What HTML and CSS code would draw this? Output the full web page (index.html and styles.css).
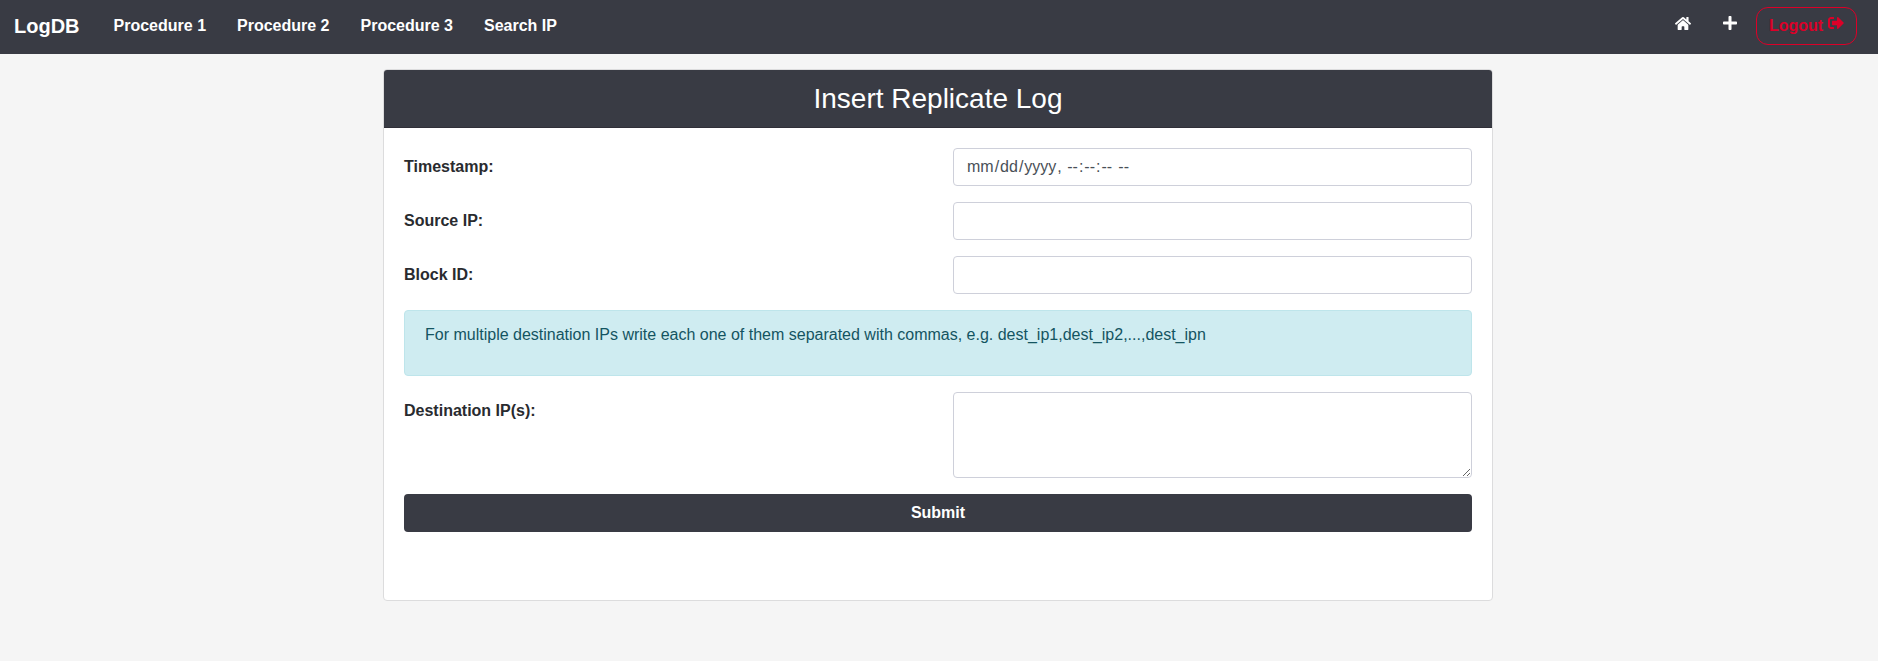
FILE: index.html
```html
<!DOCTYPE html>
<html lang="en">
<head>
<meta charset="utf-8">
<title>LogDB</title>
<link rel="stylesheet" href="styles.css">
</head>
<body>
<nav class="navbar">
  <a class="brand">LogDB</a>
  <div class="nav-links">
    <a>Procedure 1</a>
    <a>Procedure 2</a>
    <a>Procedure 3</a>
    <a>Search IP</a>
  </div>
  <div class="nav-actions">
    <a class="icon-home"><svg width="16" height="15" viewBox="0 0 576 512" preserveAspectRatio="none" fill="currentColor"><path d="M280.37 148.26L96 300.11V464a16 16 0 0 0 16 16l112.06-.29a16 16 0 0 0 15.92-16V368a16 16 0 0 1 16-16h64a16 16 0 0 1 16 16v95.64a16 16 0 0 0 16 16.05L464 480a16 16 0 0 0 16-16V300L295.67 148.26a12.19 12.19 0 0 0-15.3 0zM571.6 251.47L488 182.56V44.05a12 12 0 0 0-12-12h-56a12 12 0 0 0-12 12v72.61L318.47 43a48 48 0 0 0-61 0L4.34 251.47a12 12 0 0 0-1.6 16.9l25.5 31A12 12 0 0 0 45.15 301l235.22-193.74a12.19 12.19 0 0 1 15.3 0L530.9 301a12 12 0 0 0 16.9-1.6l25.5-31a12 12 0 0 0-1.7-16.93z"/></svg></a>
    <a class="icon-plus"><svg width="14" height="16" viewBox="0 0 448 512" fill="currentColor"><path d="M416 208H272V64c0-17.67-14.33-32-32-32h-32c-17.67 0-32 14.33-32 32v144H32c-17.67 0-32 14.33-32 32v32c0 17.67 14.33 32 32 32h144v144c0 17.67 14.33 32 32 32h32c17.67 0 32-14.33 32-32V304h144c17.67 0 32-14.33 32-32v-32c0-17.67-14.33-32-32-32z"/></svg></a>
    <a class="logout">Logout <svg width="16" height="16" viewBox="0 0 512 512" fill="currentColor"><path d="M497 273L329 441c-15 15-41 4.500-41-17v-96H152c-13.300 0-24-10.700-24-24v-96c0-13.300 10.700-24 24-24h136V88c0-21.400 25.900-32 41-17l168 168c9.300 9.400 9.300 24.600 0 34zM192 436v-40c0-6.600-5.400-12-12-12H96c-17.700 0-32-14.300-32-32V160c0-17.700 14.300-32 32-32h84c6.600 0 12-5.400 12-12V76c0-6.600-5.400-12-12-12H96c-53 0-96 43-96 96v192c0 53 43 96 96 96h84c6.600 0 12-5.400 12-12z"/></svg></a>
  </div>
</nav>
<main class="card">
  <h3 class="card-header">Insert Replicate Log</h3>
  <form class="card-body">
    <div class="row"><label for="ts">Timestamp:</label><input class="control" id="ts" type="datetime-local" step="1"></div>
    <div class="row"><label for="src">Source IP:</label><input class="control" id="src" type="text"></div>
    <div class="row"><label for="blk">Block ID:</label><input class="control" id="blk" type="text"></div>
    <div class="alert"><p>For multiple destination IPs write each one of them separated with commas, e.g. dest_ip1,dest_ip2,...,dest_ipn</p></div>
    <div class="row"><label for="dst">Destination IP(s):</label><textarea class="control area" id="dst"></textarea></div>
    <button class="submit" type="button">Submit</button>
  </form>
</main>
</body>
</html>
```
FILE: styles.css
```css
* { box-sizing: border-box; }

body {
  margin: 0;
  background: #f5f5f5;
  color: #292b2f;
  font: 16px/24px "Liberation Sans", Arial, sans-serif;
}

.navbar {
  display: flex;
  align-items: center;
  height: 54px;
  padding: 0 21px 2px 14px;
  background: #393b44;
  color: #fff;
  font-weight: 700;
}

.brand { font-size: 20px; line-height: 30px; }

.nav-links {
  display: flex;
  gap: 31px;
  margin-left: 34px;
}

.nav-actions {
  display: flex;
  align-items: center;
  margin-left: auto;
}

.nav-actions svg { display: block; }
.icon-home { margin-right: 32px; padding-bottom: 5px; }
.icon-plus { margin-right: 19px; padding-bottom: 6px; }

.logout {
  display: flex;
  gap: 5px;
  width: 101px;
  height: 38px;
  padding: 6px 11px 6px 12px;
  border: 1px solid #dc0028;
  border-radius: 12px;
  color: #dc0028;
}

.logout svg { margin-top: 1px; }

.card {
  width: 1110px;
  height: 532px;
  margin: 15px 0 0 383px;
  background: #fff;
  border: 1px solid #dcdcdd;
  border-radius: 4px;
}

.card-header {
  height: 58px;
  margin: 0;
  padding: 12px 20px;
  border-bottom: 1px solid #302f38;
  border-radius: 3px 3px 0 0;
  background: #393b44;
  color: #fff;
  font-size: 28px;
  font-weight: 400;
  line-height: 33.6px;
  text-align: center;
}

.card-body {
  display: flex;
  flex-direction: column;
  gap: 16px;
  padding: 20px;
}

.row {
  display: grid;
  grid-template-columns: 519px 519px;
  gap: 30px;
}

.row label { padding-top: 7px; font-weight: 700; }

.control {
  display: block;
  width: 100%;
  height: 38px;
  padding: 6px 12px;
  border: 1px solid #ced0da;
  border-radius: 4px;
  background: #fff;
  color: #495057;
  font: inherit;
}

.control::-webkit-calendar-picker-indicator { display: none; }
.control::-webkit-datetime-edit-ampm-field { margin-left: 1px; }

.area { height: 86px; resize: vertical; }

.alert {
  height: 66px;
  padding: 12px 20px;
  border: 1px solid #bee5eb;
  border-radius: 4px;
  background: #cfecf1;
  color: #145461;
}

.alert p { margin: 0; }

.submit {
  height: 38px;
  border: 0;
  border-radius: 4px;
  background: #393b44;
  color: #fff;
  font: inherit;
  font-weight: 700;
}
```
